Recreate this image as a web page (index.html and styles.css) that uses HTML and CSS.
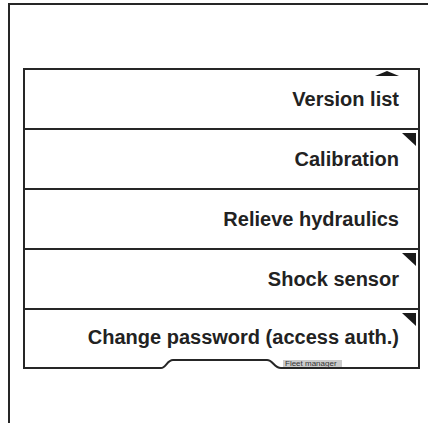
FILE: index.html
```html
<!DOCTYPE html>
<html lang="en">
<head>
	<meta charset="UTF-8">
	<title>Service menu</title>
	<link rel="stylesheet" href="styles.css">
</head>
<body>
	<div id="frame">
		<div id="menu">
			<div class="item top">Version list</div>
			<div class="item more">Calibration</div>
			<div class="item">Relieve hydraulics</div>
			<div class="item more">Shock sensor</div>
			<div class="item more last">Change password (access auth.)</div>
			<div id="menuFoot">
				<svg width="393" height="10" viewBox="0 0 393 10">
					<path d="M0 9 H136 C141 9 142 1 148 1 H242 C248 1 249 9 256 9 H393" fill="none" stroke="#262626" stroke-width="2"/>
				</svg>
				<span class="tag">Fleet manager</span>
			</div>
		</div>
	</div>
</body>
</html>
```

FILE: styles.css
```css
body {
	margin: 0;
	overflow: hidden;
	background-color: #fff;
	font-family: "Liberation Sans", Arial, sans-serif;
	color: #222;
}
#frame {
	margin: 3px 0 0 8px;
	width: 411px;
	height: 355px;
	border-top: 2px solid #262626;
	border-left: 2px solid #262626;
	padding: 63px 0 0 13px;
}
#menu {
	width: 393px;
	border: 2px solid #262626;
	border-bottom: none;
}
.item {
	position: relative;
	height: 58px;
	line-height: 59px;
	padding-right: 19px;
	text-align: right;
	font-size: 20px;
	font-weight: bold;
	border-bottom: 2px solid #262626;
}
.item.last {
	height: 43px;
	line-height: 43px;
	padding-top: 6px;
	border-bottom: none;
}
/* corner marker for items with a sub menu */
.item.more::after {
	content: "";
	position: absolute;
	top: 3px;
	right: 2px;
	border-top: 13px solid #1a1a1a;
	border-left: 14px solid transparent;
}
/* scroll marker on first item */
.item.top::after {
	content: "";
	position: absolute;
	top: 1px;
	right: 19px;
	border-bottom: 5px solid #1a1a1a;
	border-left: 12px solid transparent;
	border-right: 12px solid transparent;
}
#menuFoot {
	position: relative;
	height: 10px;
}
#menuFoot svg {
	display: block;
}
.tag {
	position: absolute;
	left: 258px;
	top: 1px;
	width: 59px;
	height: 7px;
	padding-left: 2px;
	box-sizing: border-box;
	background-color: #cbcbcb;
	font-size: 8px;
	line-height: 7px;
	color: #333;
	white-space: nowrap;
}
```
